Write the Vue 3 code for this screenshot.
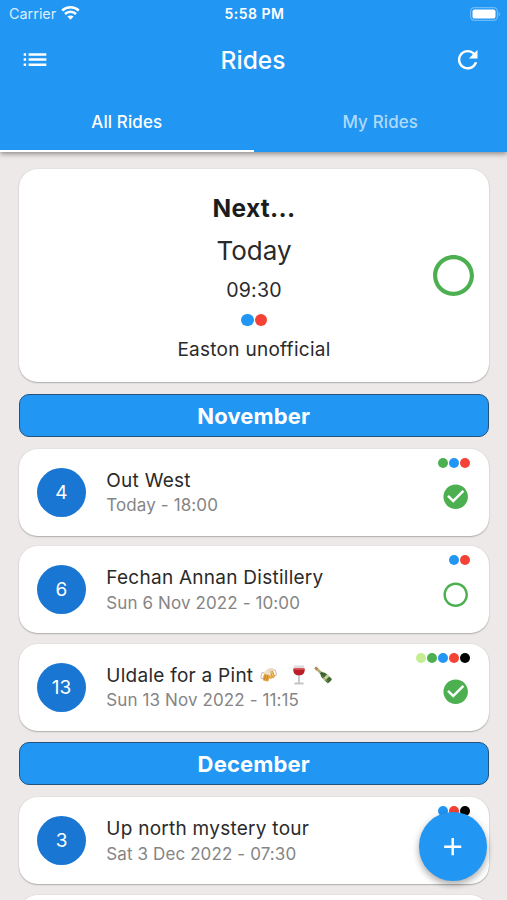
<script setup>
const sections = [
  {
    month: 'November',
    rides: [
      { day: 4, title: 'Out West', when: 'Today - 18:00', groups: ['green', 'blue', 'red'], going: true },
      { day: 6, title: 'Fechan Annan Distillery', when: 'Sun 6 Nov 2022 - 10:00', groups: ['blue', 'red'], going: false },
      { day: 13, title: 'Uldale for a Pint', when: 'Sun 13 Nov 2022 - 11:15', groups: ['lime', 'green', 'blue', 'red', 'black'], going: true, drinks: true },
    ],
  },
  {
    month: 'December',
    rides: [
      { day: 3, title: 'Up north mystery tour', when: 'Sat 3 Dec 2022 - 07:30', groups: ['blue', 'red', 'black'], going: false },
      { day: '', title: '', when: '', groups: [], going: null },
    ],
  },
]
</script>

<template>
  <div class="screen">
    <header class="appbar">
      <div class="status">
        <div class="carrier">
          <span>Carrier</span>
          <svg class="wifi" viewBox="0 0 19 14">
            <path d="M1.2 4.7C5.8 .2 13.2 .2 17.8 4.7" />
            <path d="M4 8C7.1 5 11.9 5 15 8" />
            <path class="tip" d="M9.5 13.7L6.4 10.5C8.1 9 10.9 9 12.6 10.5Z" />
          </svg>
        </div>
        <span class="clock">5:58 PM</span>
        <svg class="battery" viewBox="0 0 31 14">
          <rect class="case" x=".6" y=".6" width="26.8" height="12.8" rx="3.8" />
          <rect class="level" x="2.5" y="2.4" width="23" height="9.2" rx="2.2" />
          <path class="pole" d="M28.6 4.7C30.6 5.5 30.6 8.5 28.6 9.3Z" />
        </svg>
      </div>
      <div class="toolbar">
        <svg class="icon" viewBox="0 0 24 24">
          <path d="M3 6.7h2v2H3zM3 10.9h2v2H3zM3 15.1h2v2H3zM7 6.7h14.5v2H7zM7 10.9h14.5v2H7zM7 15.1h14.5v2H7z" />
        </svg>
        <h1>Rides</h1>
        <svg class="icon" viewBox="0 0 24 24">
          <path d="M17.65 6.35C16.2 4.9 14.21 4 12 4c-4.42 0-7.99 3.58-7.99 8s3.57 8 7.99 8c3.73 0 6.84-2.55 7.73-6h-2.08c-.82 2.33-3.04 4-5.65 4-3.31 0-6-2.69-6-6s2.69-6 6-6c1.66 0 3.14.69 4.22 1.78L13 11h7V4l-2.35 2.35z" />
        </svg>
      </div>
      <nav class="tabs">
        <div class="tab active">All Rides</div>
        <div class="tab">My Rides</div>
      </nav>
    </header>

    <main class="list">
      <section class="next">
        <div class="next-body">
          <h2>Next...</h2>
          <div class="next-day">Today</div>
          <div class="next-time">09:30</div>
          <div class="dots large"><i class="blue"></i><i class="red"></i></div>
          <div class="next-name">Easton unofficial</div>
        </div>
        <svg class="ring-large" viewBox="0 0 24 24">
          <path d="M12 2C6.48 2 2 6.48 2 12s4.48 10 10 10 10-4.48 10-10S17.52 2 12 2zm0 18c-4.42 0-8-3.58-8-8s3.58-8 8-8 8 3.58 8 8-3.58 8-8 8z" />
        </svg>
      </section>

      <template v-for="section in sections" :key="section.month">
        <div class="month">{{ section.month }}</div>
        <article v-for="(ride, n) in section.rides" :key="n" class="ride">
          <div class="day">{{ ride.day }}</div>
          <div class="info">
            <div class="title">
              <span>{{ ride.title }}</span>
              <span v-if="ride.drinks" class="drinks">
                <svg class="emoji beers" viewBox="0 0 18 18">
                  <g transform="rotate(-18 12 9)">
                    <rect x="13.5" y="4.5" width="3" height="6" rx="1.4" fill="none" stroke="#c9bba9" />
                    <rect x="8.5" y="3.5" width="5.8" height="8.5" rx="1" fill="#dc9a38" />
                    <path d="M10.3 6v5M12.6 6v5" stroke="#f8d57d" stroke-width=".8" />
                    <path d="M8.2 5.5V2.7q1.3-1.5 3-.8 2.6-.8 3.5 1v2.4z" fill="#eadbc6" />
                  </g>
                  <g transform="rotate(16 6 11)">
                    <rect x="1" y="7.5" width="3" height="6" rx="1.4" fill="none" stroke="#c9bba9" />
                    <rect x="3.5" y="6.5" width="6" height="8.5" rx="1" fill="#e7a33c" />
                    <path d="M5.2 9v5M7.5 9v5" stroke="#b9741d" stroke-width=".7" />
                    <path d="M3.2 8.5V5.7q1.3-1.8 3-.8 2.6-.8 3.5 1v2.4z" fill="#eee1c8" />
                  </g>
                </svg>
                <svg class="emoji wine" viewBox="0 0 18 20">
                  <path d="M4 .5h10c.8 3 .8 5 .5 6.5-.7 2.6-2.5 3.8-5.5 3.8S4.2 9.6 3.5 7C3.2 5.5 3.2 3.5 4 .5z" fill="#dedbdc" />
                  <path d="M3.3 3.8h11.4c.2 4.2-1.7 6.600-5.700 6.600s-5.900-2.400-5.700-6.600z" fill="#b91e2a" />
                  <ellipse cx="9" cy="4" rx="5.5" ry="1.1" fill="#d84b4b" />
                  <path d="M9 10.5V18" stroke="#b9b7ba" stroke-width="1.5" />
                  <ellipse cx="9" cy="18.4" rx="5" ry="1.2" fill="#c8c6c9" />
                </svg>
                <svg class="emoji bottle" viewBox="0 0 20 18">
                  <g transform="rotate(-47 10 9)">
                    <rect x="8.7" y="-2" width="3" height="3.5" rx="1" fill="#ad8c5e" />
                    <rect x="8.9" y="1" width="2.6" height="4.5" fill="#b5ad62" />
                    <path d="M8.9 5.5h2.6c0 2 1.7 3 1.7 5v7.5c0 1-6 1-6 0v-7.5c0-2 1.7-3 1.7-5z" fill="#3f6830" />
                    <rect x="7.2" y="11.5" width="6" height="3" fill="#c9cf9c" />
                    <path d="M8.5 9.5v8" stroke="#88a663" stroke-width=".7" />
                  </g>
                </svg>
              </span>
            </div>
            <div class="when">{{ ride.when }}</div>
          </div>
          <div class="state">
            <div class="dots"><i v-for="group in ride.groups" :key="group" :class="group"></i></div>
            <svg v-if="ride.going !== null" class="mark" viewBox="0 0 24 24">
              <path v-if="ride.going" d="M12 2C6.48 2 2 6.48 2 12s4.48 10 10 10 10-4.48 10-10S17.52 2 12 2zm-2 15l-5-5 1.41-1.41L10 14.17l7.59-7.59L19 8l-9 9z" />
              <path v-else d="M12 2C6.48 2 2 6.48 2 12s4.48 10 10 10 10-4.48 10-10S17.52 2 12 2zm0 18c-4.42 0-8-3.58-8-8s3.58-8 8-8 8 3.58 8 8-3.58 8-8 8z" />
            </svg>
          </div>
        </article>
      </template>
    </main>

    <button class="fab" aria-label="Add ride">
      <svg viewBox="0 0 24 24"><path d="M19 13h-6v6h-2v-6H5v-2h6V5h2v6h6v2z" /></svg>
    </button>
  </div>
</template>

<style>
body {
  margin: 0;
  overflow: hidden;
}
</style>

<style scoped>
.screen {
  position: relative;
  display: flex;
  flex-direction: column;
  width: 507px;
  height: 900px;
  overflow: hidden;
  background: #ece9e8;
  color: #2a2a2a;
  font-family: Inter, "Liberation Sans", sans-serif;
  box-sizing: border-box;
}
.screen * {
  box-sizing: border-box;
}
h1,
h2 {
  margin: 0;
}
.appbar {
  position: relative;
  z-index: 1;
  flex: none;
  display: flex;
  flex-direction: column;
  height: 152.4px;
  background: #2196f3;
  color: #fff;
  box-shadow: 0 2px 5px rgba(0, 0, 0, 0.4);
}
.status {
  display: grid;
  grid-template-columns: 1fr auto 1fr;
  align-items: center;
  height: 27px;
  padding: 0 7px 0 9px;
}
.carrier {
  display: flex;
  align-items: center;
  gap: 5px;
  color: #dceefd;
  font-size: 14.4px;
}
.wifi {
  width: 19px;
  height: 14px;
  margin-top: -1px;
  fill: none;
  stroke: #fff;
  stroke-width: 2.5;
}
.wifi .tip {
  fill: #fff;
  stroke: none;
}
.clock {
  font-size: 14px;
  font-weight: 600;
  letter-spacing: 0.5px;
}
.battery {
  justify-self: end;
  width: 31px;
  height: 14px;
  margin-right: -1px;
}
.battery .case {
  fill: none;
  stroke: #6fb9f6;
  stroke-width: 1.2;
}
.battery .level {
  fill: #fff;
}
.battery .pole {
  fill: #6fb9f6;
}
.toolbar {
  display: flex;
  align-items: center;
  justify-content: space-between;
  height: 65px;
  padding: 0 25px 0 20px;
}
.icon {
  width: 29.4px;
  height: 29.4px;
  fill: #fff;
}
h1 {
  padding: 0 0 0 4px;
  font-size: 24.5px;
  font-weight: 500;
}
.tabs {
  flex: 1;
  display: flex;
}
.tab {
  flex: 1;
  display: flex;
  align-items: center;
  justify-content: center;
  padding-top: 2px;
  border-bottom: 2.5px solid transparent;
  color: #b0dafb;
  font-size: 16.9px;
  font-weight: 500;
  letter-spacing: 0.15px;
}
.tab.active {
  border-color: #fff;
  color: #fff;
}
.list {
  display: flex;
  flex-direction: column;
  padding: 17.1px 18px 0 18.5px;
}
.next,
.ride {
  flex: none;
  border-radius: 18.4px;
  background: #fff;
  box-shadow: 0 1px 1.5px rgba(0, 0, 0, 0.24), 0 0 1.5px rgba(0, 0, 0, 0.12);
}
.next {
  display: grid;
  grid-template-columns: 49px 1fr 49px;
  align-items: center;
  height: 213px;
  padding: 0 11.5px 0 12px;
}
.next-body {
  grid-column: 2;
  display: flex;
  flex-direction: column;
  align-items: center;
  padding-top: 2.6px;
}
h2 {
  color: #1c1c1c;
  font-size: 24.5px;
  line-height: 39px;
  font-weight: 700;
  letter-spacing: 0.3px;
}
.next-day {
  font-size: 26px;
  line-height: 46px;
}
.next-time {
  font-size: 19.6px;
  line-height: 33px;
  letter-spacing: 0.15px;
}
.next-name {
  font-size: 19px;
  line-height: 32px;
  letter-spacing: 0.27px;
}
.ring-large {
  width: 49px;
  height: 49px;
  fill: #4caf50;
}
.dots {
  display: flex;
  gap: 1px;
}
.dots i {
  width: 10px;
  height: 10px;
  border-radius: 50%;
}
.dots.large {
  padding: 7px 0 8px;
}
.dots.large i {
  width: 12.5px;
  height: 12.5px;
}
.dots .blue {
  background: #2196f3;
}
.dots .red {
  background: #f44336;
}
.dots .green {
  background: #4caf50;
}
.dots .lime {
  background: #c5ed91;
}
.dots .black {
  background: #000;
}
.month {
  flex: none;
  display: flex;
  align-items: center;
  justify-content: center;
  height: 43.2px;
  margin: 11.3px 0 1.1px;
  padding-top: 0.5px;
  border: 1.2px solid #24527d;
  border-radius: 10px;
  background: #2196f3;
  color: #fff;
  font-size: 22px;
  font-weight: 700;
  letter-spacing: 0.15px;
}
.ride {
  display: flex;
  align-items: center;
  height: 87px;
  margin-top: 10.65px;
  padding: 0 19px 0 18.5px;
}
.day {
  display: grid;
  place-items: center;
  width: 49px;
  height: 49px;
  border-radius: 50%;
  background: #1976d2;
  color: #fff;
  font-size: 19px;
}
.info {
  flex: 1;
  padding: 1px 0 0 20.3px;
}
.title {
  display: flex;
  align-items: center;
  height: 26px;
  font-size: 19px;
  letter-spacing: 0.26px;
}
.when {
  height: 25px;
  color: #858585;
  font-size: 17px;
  line-height: 25px;
  letter-spacing: 0.11px;
}
.drinks {
  display: flex;
  align-items: center;
  padding-left: 6.5px;
}
.emoji {
  display: block;
  width: 18px;
  height: 18px;
}
.wine {
  height: 20px;
  margin-left: 12px;
}
.bottle {
  width: 20px;
  margin-left: 5px;
}
.state {
  align-self: stretch;
  display: flex;
  flex-direction: column;
  align-items: flex-end;
  padding-top: 9px;
}
.mark {
  width: 29.4px;
  height: 29.4px;
  margin-top: 14.3px;
  fill: #4caf50;
}
.fab {
  position: absolute;
  right: 19.7px;
  bottom: 19.5px;
  z-index: 2;
  display: grid;
  place-items: center;
  width: 68.6px;
  height: 68.6px;
  padding: 0;
  border: 0;
  border-radius: 50%;
  background: #2196f3;
  box-shadow: 0 4px 6px rgba(0, 0, 0, 0.22), 0 2px 9px rgba(0, 0, 0, 0.14);
}
.fab svg {
  width: 29.4px;
  height: 29.4px;
  fill: #fff;
}
</style>
